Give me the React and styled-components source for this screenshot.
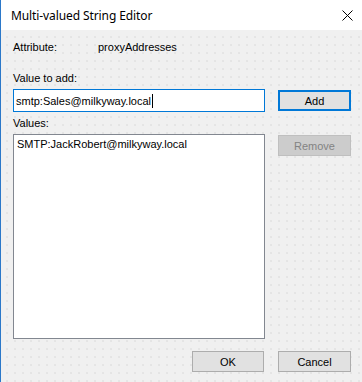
import React from "react";
import styled, { createGlobalStyle } from "styled-components";

const Global = createGlobalStyle`
  html, body { margin: 0; padding: 0; background: #ffffff; }
  body { width: 362px; height: 382px; overflow: hidden; }
  * { box-sizing: border-box; }
`;

const Window = styled.div`
  width: 362px;
  height: 382px;
  display: flex;
  flex-direction: column;
  border-left: 1px solid #2b78c9;
  font-family: "Liberation Sans", Arial, sans-serif;
  font-size: 11px;
  color: #000;
`;

const TitleBar = styled.div`
  height: 30px;
  flex: none;
  background: #ffffff;
  display: flex;
  align-items: center;
  justify-content: space-between;
  padding: 0 8px 0 10px;
`;

const Title = styled.span`
  font-family: "Segoe UI", "Noto Sans", sans-serif;
  font-size: 12px;
  color: #000;
  letter-spacing: -0.1px;
`;

const CloseBtn = styled.span`
  width: 12px;
  height: 12px;
  display: flex;
  align-items: center;
  justify-content: center;
  margin-right: 1px;
`;

const Content = styled.div`
  flex: 1;
  background-color: #f0f0f0;
  background-image: radial-gradient(circle, #e5e5e5 0.7px, transparent 0.9px);
  background-size: 8px 8px;
  background-position: 2px 3px;
  padding: 11px 11px 0 12px;
  display: flex;
  flex-direction: column;
`;

const AttrRow = styled.div`
  display: flex;
  height: 13px;
  line-height: 13px;
`;

const AttrLabel = styled.span`
  width: 85px;
`;

const Label = styled.div`
  height: 13px;
  line-height: 13px;
  margin-top: ${(p) => p.$mt}px;
`;

const Row = styled.div`
  display: grid;
  grid-template-columns: 252px 73px;
  column-gap: 13px;
  align-items: start;
  margin-top: ${(p) => p.$mt}px;
`;

const TextBox = styled.div`
  height: 23px;
  background: #ffffff;
  border: 1px solid #0078d7;
  display: flex;
  align-items: center;
  padding-left: 2px;
  white-space: nowrap;
`;

const Caret = styled.span`
  display: inline-block;
  width: 1px;
  height: 14px;
  background: #000;
  margin-left: 1px;
`;

const ListBox = styled.div`
  height: 205px;
  background: #ffffff;
  border: 1px solid #828790;
  padding: 3px 3px;
  line-height: 13px;
`;

const Button = styled.button`
  height: 21px;
  width: 73px;
  margin-top: 1px;
  padding: 0;
  font-family: "Liberation Sans", Arial, sans-serif;
  font-size: 11px;
  color: ${(p) => (p.disabled ? "#838383" : "#000")};
  background: ${(p) => (p.disabled ? "#cccccc" : "#e1e1e1")};
  border: ${(p) =>
    p.$default ? "2px solid #0078d7" : p.disabled ? "1px solid #bfbfbf" : "1px solid #adadad"};
`;

const Footer = styled.div`
  display: flex;
  justify-content: flex-end;
  gap: 14px;
  margin-top: 12px;
`;

const FooterButton = styled(Button)`
  margin-top: 0;
  width: ${(p) => p.$w}px;
`;

export default function App() {
  return (
    <>
      <Global />
      <Window>
        <TitleBar>
          <Title>Multi-valued String Editor</Title>
          <CloseBtn>
            <svg width="11" height="11" viewBox="0 0 11 11">
              <path d="M0.5 0.5 L10.5 10.5 M10.5 0.5 L0.5 10.5" stroke="#000" strokeWidth="1" fill="none" />
            </svg>
          </CloseBtn>
        </TitleBar>
        <Content>
          <AttrRow>
            <AttrLabel>Attribute:</AttrLabel>
            <span>proxyAddresses</span>
          </AttrRow>
          <Label $mt={18}>Value to add:</Label>
          <Row $mt={4}>
            <TextBox>
              smtp:Sales@milkyway.local
              <Caret />
            </TextBox>
            <Button $default>Add</Button>
          </Row>
          <Label $mt={5}>Values:</Label>
          <Row $mt={4}>
            <ListBox>SMTP:JackRobert@milkyway.local</ListBox>
            <Button disabled>Remove</Button>
          </Row>
          <Footer>
            <FooterButton $w={72}>OK</FooterButton>
            <FooterButton $w={73}>Cancel</FooterButton>
          </Footer>
        </Content>
      </Window>
    </>
  );
}
